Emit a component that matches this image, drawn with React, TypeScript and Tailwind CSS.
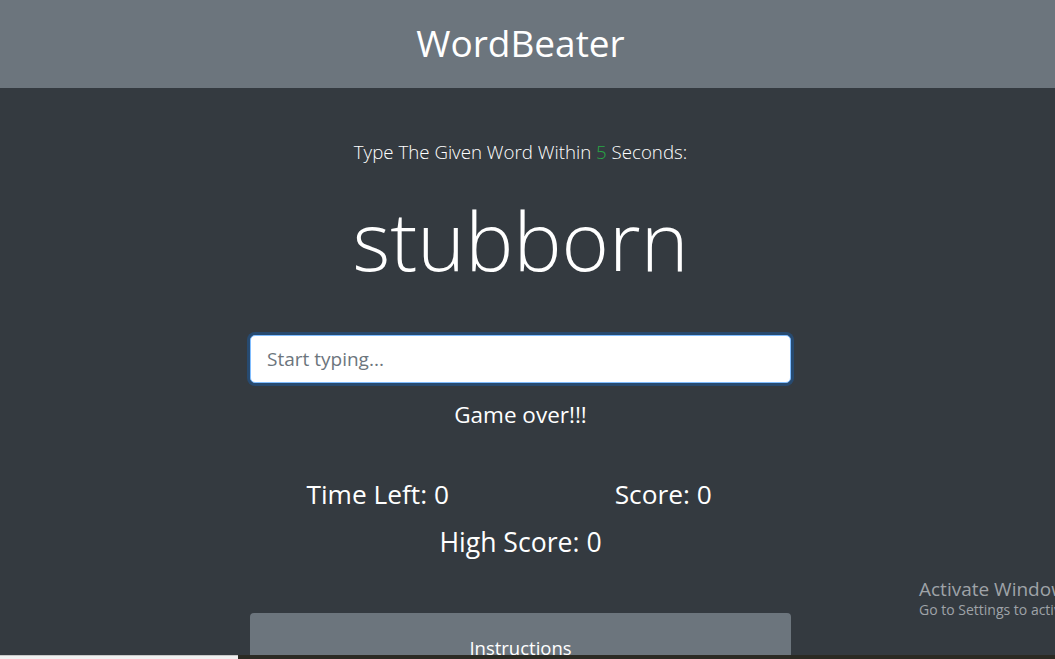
import React from "react";

export default function App() {
  const font = { fontFamily: '"Open Sans", "Noto Sans", "Liberation Sans", sans-serif' };
  return (
    <div className="relative w-[1055px] h-[659px] overflow-hidden bg-[#343a40] text-white" style={font}>
      <header className="h-[88px] bg-[#6c757d] flex items-center justify-center pr-[14px]">
        <h1 className="text-[37px] leading-[44px] font-normal mt-[-2px]">WordBeater</h1>
      </header>
      <main className="flex flex-col items-center pr-[14px]">
        <div className="w-[571px] px-[15px] flex flex-col items-center">
          <p className="mt-[49px] text-[18.7px] leading-[30px] font-light">
            Type The Given Word Within <span className="text-[#28a745]">5</span> Seconds:
          </p>
          <h2 className="mt-[15px] text-[81px] leading-[115px] font-light">stubborn</h2>
          <input
            className="mt-[38px] w-[541px] h-[48px] rounded-[5px] bg-white border border-[#80bdff] shadow-[0_0_0_3px_rgba(0,123,255,0.25)] px-[16px] text-[19px] text-[#495057] placeholder:text-[#6c757d] outline-none"
            placeholder="Start typing..."
          />
          <h4 className="mt-[17px] text-[22.5px] leading-[29px] font-normal">Game over!!!</h4>
          <div className="mt-[48px] w-[571px] grid grid-cols-2">
            <h3 className="text-center text-[26.3px] leading-[34px] font-normal">Time Left: 0</h3>
            <h3 className="text-center text-[26.3px] leading-[34px] font-normal">Score: 0</h3>
          </div>
          <h3 className="mt-[14px] text-center text-[26.6px] leading-[34px] font-normal">High Score: 0</h3>
          <div className="mt-[54px] w-[541px] h-[80px] rounded-[4px] bg-[#6c757d] flex justify-center pt-[23px]">
            <h5 className="text-[18.5px] leading-[24px] font-normal">Instructions</h5>
          </div>
        </div>
      </main>
      <div className="absolute left-[919px] top-[576px] text-[#9fa3a8] whitespace-nowrap">
        <div className="text-[19px] leading-[26px]">Activate Windows</div>
        <div className="text-[14px] leading-[18px] mt-[-1px]">Go to Settings to activate Windows.</div>
      </div>
      <div className="absolute left-0 bottom-0 w-full h-[4px] flex">
        <div className="w-[238px] h-full bg-[#f0f0f0] border-t border-[#c8c8c8]"></div>
        <div className="flex-1 h-full bg-[#2b2a23]"></div>
      </div>
    </div>
  );
}
